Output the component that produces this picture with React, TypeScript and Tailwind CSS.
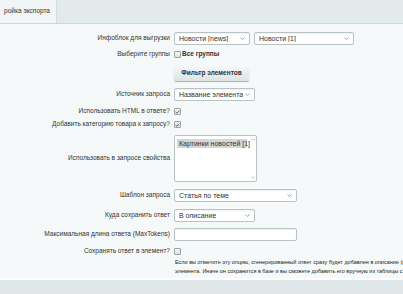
import React from 'react';

const Chevron: React.FC = () => (
  <svg width="5" height="3" viewBox="0 0 5 3" className="shrink-0">
    <path d="M0.5 0.5 L2.5 2.5 L4.5 0.5" fill="none" stroke="#8a9295" strokeWidth="0.8" />
  </svg>
);

const Select: React.FC<{ value: string; width: string }> = ({ value, width }) => (
  <div
    className={`${width} h-[13px] bg-white border border-[#b9c2c5] rounded-[2px] flex items-center justify-between pl-[4px] pr-[4px] shadow-[inset_0_1px_1px_rgba(0,0,0,0.06)]`}
  >
    <span className="truncate">{value}</span>
    <Chevron />
  </div>
);

const Checkbox: React.FC<{ checked?: boolean }> = ({ checked }) => (
  <div className="w-[7px] h-[7px] border border-[#9aa3a6] rounded-[1px] bg-gradient-to-b from-[#f4f6f6] to-[#dce1e2] flex items-center justify-center shrink-0">
    {checked && (
      <svg width="5" height="4" viewBox="0 0 5 4">
        <path d="M0.6 2 L1.9 3.2 L4.4 0.6" fill="none" stroke="#4b5355" strokeWidth="0.9" />
      </svg>
    )}
  </div>
);

const Row: React.FC<{ label: string; mt: string; children: React.ReactNode }> = ({ label, mt, children }) => (
  <div className={`flex items-center ${mt}`}>
    <div className="w-[171px] shrink-0 text-right pr-[1px] whitespace-nowrap text-[6.5px]">{label}</div>
    <div className="ml-[3px] flex items-center gap-[4px]">{children}</div>
  </div>
);

const App: React.FC = () => {
  return (
    <div
      className="w-[403px] h-[294px] overflow-hidden flex flex-col bg-[#f5f9f9] text-[#333] text-[7px] leading-none"
      style={{ fontFamily: '"Liberation Sans", Arial, sans-serif' }}
    >
      <div className="h-[24px] shrink-0 bg-[#e3eaec] border-b border-[#ccd5d8] flex">
        <div className="w-[57px] h-full bg-[#f1f5f6] border-r border-[#d3dbde] flex items-center justify-end pr-[6px] whitespace-nowrap overflow-hidden text-[6.5px]">
          ройка экспорта
        </div>
      </div>

      <div className="flex-1 overflow-hidden flex flex-col">
        <Row label="Инфоблок для выгрузки" mt="mt-[8px]">
          <Select value="Новости [news]" width="w-[76px]" />
          <Select value="Новости [1]" width="w-[100px]" />
        </Row>

        <Row label="Выберите группы" mt="mt-[6px]">
          <div className="flex items-center gap-[1px]">
            <Checkbox />
            <span className="font-bold text-[6.5px]">Все группы</span>
          </div>
        </Row>

        <div className="flex mt-[7px]">
          <div className="w-[174px] shrink-0" />
          <button className="w-[75px] h-[16px] rounded-[2px] bg-gradient-to-b from-[#f7f9f9] to-[#dde3e4] shadow-[0_1px_1px_rgba(0,0,0,0.3)] font-bold text-[#333] text-[6.5px]">
            Фильтр элементов
          </button>
        </div>

        <Row label="Источник запроса" mt="mt-[7px]">
          <Select value="Название элемента" width="w-[81px]" />
        </Row>

        <Row label="Использовать HTML в ответе?" mt="mt-[7px]">
          <Checkbox checked />
        </Row>

        <Row label="Добавить категорию товара к запросу?" mt="mt-[6px]">
          <Checkbox checked />
        </Row>

        <Row label="Использовать в запросе свойства" mt="mt-[7px]">
          <div className="w-[83px] h-[47px] bg-white border border-[#b9c2c5] rounded-[2px] flex">
            <div className="flex-1 pl-[2px] pt-[3px]">
              <div className="w-[70px] h-[9px] bg-[#d4d6d7] flex items-center pl-[2px] whitespace-nowrap">
                Картинки новостей [1]
              </div>
            </div>
            <div className="w-[6px] flex flex-col justify-between items-center py-[2px]">
              <svg width="4" height="3" viewBox="0 0 4 3">
                <path d="M0.4 2.5 L2 0.8 L3.6 2.5" fill="none" stroke="#a3aaad" strokeWidth="0.7" />
              </svg>
              <svg width="4" height="3" viewBox="0 0 4 3">
                <path d="M0.4 0.5 L2 2.2 L3.6 0.5" fill="none" stroke="#a3aaad" strokeWidth="0.7" />
              </svg>
            </div>
          </div>
        </Row>

        <Row label="Шаблон запроса" mt="mt-[7px]">
          <Select value="Статья по теме" width="w-[123px]" />
        </Row>

        <Row label="Куда сохранить ответ" mt="mt-[7px]">
          <Select value="В описание" width="w-[81px]" />
        </Row>

        <Row label="Максимальная длина ответа (MaxTokens)" mt="mt-[6px]">
          <div className="w-[123px] h-[13px] bg-white border border-[#b9c2c5] rounded-[2px] shadow-[inset_0_1px_1px_rgba(0,0,0,0.06)]" />
        </Row>

        <Row label="Сохранять ответ в элемент?" mt="mt-[7px]">
          <Checkbox />
        </Row>

        <div className="flex mt-[3px]">
          <div className="w-[175px] shrink-0" />
          <div className="text-[5.5px] leading-[9px] text-[#222] whitespace-nowrap">
            <div>Если вы отметите эту опцию, сгенерированный ответ сразу будет добавлен в описание (или свойство)</div>
            <div>элемента. Иначе он сохранится в базе и вы сможете добавить его вручную из таблицы с результатами.</div>
          </div>
        </div>
      </div>

      <div className="h-[16px] shrink-0 bg-[#dfe6e7] border-t-2 border-white" />
    </div>
  );
};

export default App;
